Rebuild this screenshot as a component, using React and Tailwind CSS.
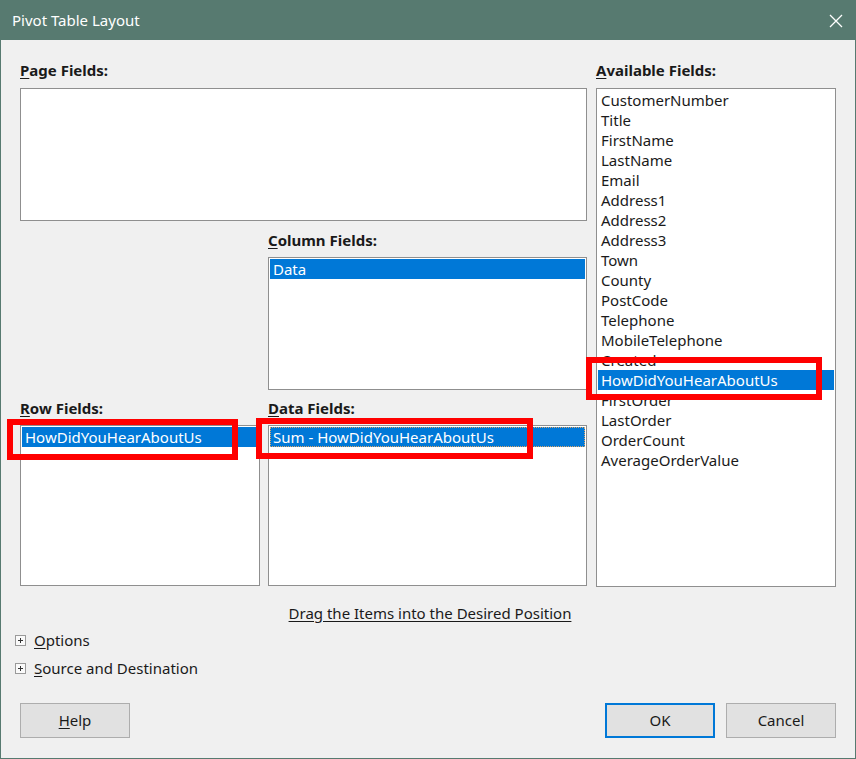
import React from 'react';

const FONT = { fontFamily: '"Noto Sans", "Open Sans", sans-serif' };

const available = [
  'CustomerNumber', 'Title', 'FirstName', 'LastName', 'Email', 'Address1',
  'Address2', 'Address3', 'Town', 'County', 'PostCode', 'Telephone',
  'MobileTelephone', 'Created', 'HowDidYouHearAboutUs', 'FirstOrder',
  'LastOrder', 'OrderCount', 'AverageOrderValue',
];

const Label = ({ accel, rest, className = '' }) => (
  <div className={`h-[18px] text-[15px] leading-[18px] font-bold text-[#1a1a1a] ${className}`}>
    <span className="underline underline-offset-2">{accel}</span>
    {rest}
  </div>
);

const Row = ({ text, selected, focus }) => (
  <div
    className={`h-[20px] px-[3px] text-[15px] leading-[20px] whitespace-nowrap ${
      selected ? 'bg-[#0078d7] text-white' : 'text-[#1a1a1a]'
    } ${focus ? 'outline outline-1 outline-dotted outline-[#d9a56b] -outline-offset-1' : ''}`}
  >
    {text}
  </div>
);

const ListBox = ({ className = '', children }) => (
  <div className={`bg-white border border-[#8f8f8f] p-px overflow-hidden ${className}`}>
    {children}
  </div>
);

const Expander = ({ accel, rest }) => (
  <div className="flex items-center h-[28px] gap-[8px]">
    <div className="w-[11px] h-[11px] border border-[#9a9a9a] bg-[#fafafa] flex items-center justify-center relative">
      <div className="w-[5px] h-px bg-[#333]" />
      <div className="absolute w-px h-[5px] bg-[#333]" />
    </div>
    <div className="text-[15px] text-[#1a1a1a]">
      <span className="underline underline-offset-2">{accel}</span>
      {rest}
    </div>
  </div>
);

const Button = ({ children, primary, className = '' }) => (
  <div
    className={`w-[110px] h-[35px] flex items-center justify-center text-[15px] text-[#1a1a1a] bg-[#e1e1e1] ${
      primary ? 'border-2 border-[#0078d7]' : 'border border-[#adadad]'
    } ${className}`}
  >
    {children}
  </div>
);

export default function App() {
  return (
    <div style={FONT} className="relative w-[856px] h-[759px] bg-[#f0f0f0] border border-t-0 border-[#577a70] flex flex-col">
      {/* title bar */}
      <div className="h-[40px] bg-[#577a70] flex items-center justify-between pl-[12px] pr-[13px] -mx-px">
        <div className="text-[15px] text-white">Pivot Table Layout</div>
        <svg width="14" height="14" viewBox="0 0 14 14" className="mt-px">
          <path d="M1 1 L13 13 M13 1 L1 13" stroke="#fff" strokeWidth="1.3" />
        </svg>
      </div>

      <div className="flex gap-[9px] pl-[19px] pt-[21px]">
        {/* left area */}
        <div className="w-[567px] flex flex-col">
          <Label accel="P" rest="age Fields:" />
          <ListBox className="mt-[9px] h-[133px]" />

          <div className="flex gap-[9px] mt-[10px]">
            <div className="w-[239px]" />
            <div className="w-[319px] flex flex-col">
              <Label accel="C" rest="olumn Fields:" />
              <ListBox className="mt-[8px] h-[133px]">
                <Row text="Data" selected />
              </ListBox>
            </div>
          </div>

          <div className="flex gap-[8px] mt-[9px]">
            <div className="w-[240px] flex flex-col">
              <Label accel="R" rest="ow Fields:" />
              <ListBox className="mt-[8px] h-[161px]">
                <Row text="HowDidYouHearAboutUs" selected />
              </ListBox>
            </div>
            <div className="w-[319px] flex flex-col">
              <Label accel="D" rest="ata Fields:" />
              <ListBox className="mt-[8px] h-[161px]">
                <Row text="Sum - HowDidYouHearAboutUs" selected focus />
              </ListBox>
            </div>
          </div>
        </div>

        {/* available fields */}
        <div className="w-[240px] flex flex-col">
          <Label accel="A" rest="vailable Fields:" />
          <ListBox className="mt-[9px] h-[499px]">
            {available.map((f) => (
              <Row key={f} text={f} selected={f === 'HowDidYouHearAboutUs'} />
            ))}
          </ListBox>
        </div>
      </div>

      <div className="flex justify-center mt-[15px] pl-[4px]">
        <div className="text-[15px] text-[#1a1a1a] underline underline-offset-2">
          Drag the Items into the Desired Position
        </div>
      </div>

      <div className="flex flex-col pl-[14px] mt-[2px]">
        <Expander accel="O" rest="ptions" />
        <Expander accel="S" rest="ource and Destination" />
      </div>

      <div className="flex items-center pl-[19px] pr-[19px] mt-[20px]">
        <Button>
          <span className="underline underline-offset-2">H</span>elp
        </Button>
        <div className="flex-1" />
        <Button primary>OK</Button>
        <Button className="ml-[11px]">Cancel</Button>
      </div>

      {/* red annotation boxes */}
      <div className="absolute left-[6px] top-[419px] w-[231px] h-[41px] border-[6px] border-[#ff0000]" />
      <div className="absolute left-[255px] top-[418px] w-[277px] h-[41px] border-[6px] border-[#ff0000]" />
      <div className="absolute left-[585px] top-[357px] w-[236px] h-[43px] border-[6px] border-[#ff0000]" />
    </div>
  );
}
